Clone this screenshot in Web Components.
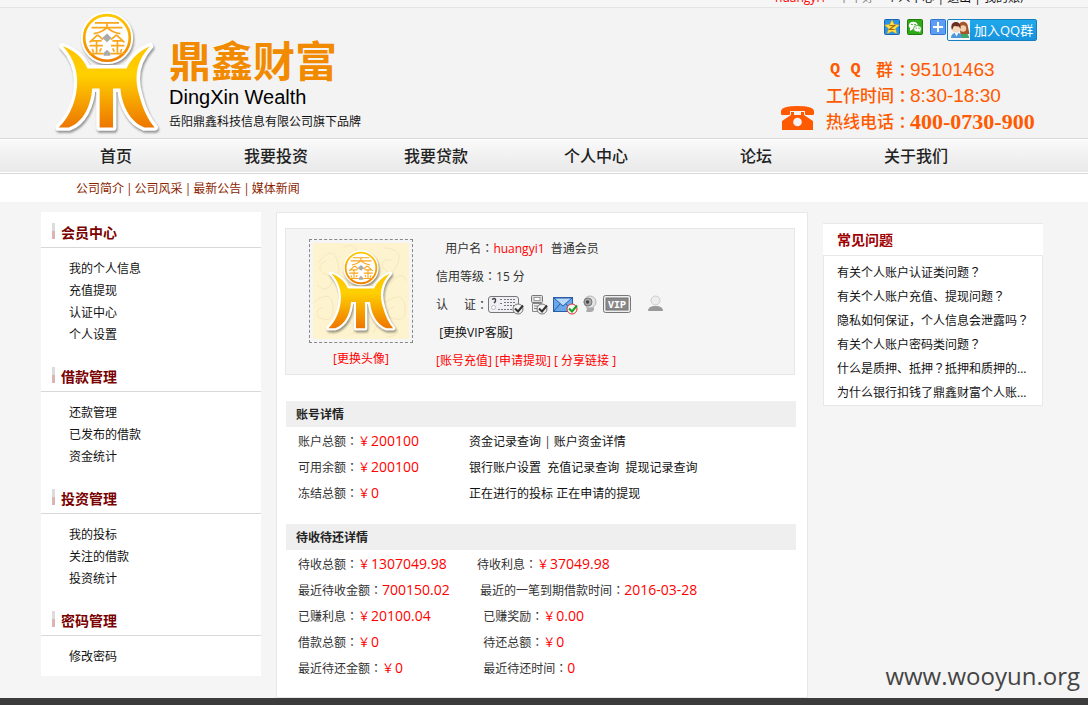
<!DOCTYPE html>
<html lang="zh-CN">
<head>
<meta charset="utf-8">
<title>鼎鑫财富 - 个人中心</title>
<style>
html,body{margin:0;height:100%}
body{background:#f5f5f5;color:#333;font:12px/22px "Open Sans","Noto Sans CJK SC",sans-serif}
</style>
</head>
<body>
<app-page></app-page>
<script>
const define = (name, css, html) => {
  const tpl = document.createElement('template');
  const base = '*{box-sizing:border-box}a{color:inherit;text-decoration:none}ul,h1,h2,h3,p{margin:0;padding:0;list-style:none}.c{font-family:"Noto Sans CJK JP",sans-serif;line-height:1}';
  tpl.innerHTML = `<style>:host{display:block}${base}${css}</style>${html}`;
  customElements.define(name, class extends HTMLElement {
    constructor() {
      super();
      this.attachShadow({mode: 'open'}).appendChild(tpl.content.cloneNode(true));
    }
  });
};
const colon = '<span class="c" lang="ja">：</span>';

define('brand-mark', `svg{display:block;width:100%;height:100%;overflow:visible;filter:drop-shadow(1px 2px 1px #0006)}`, `
<svg viewBox="165 30 310 375" aria-hidden="true">
<defs><linearGradient id="g" x1="0" y1="0" x2="0" y2="1"><stop offset="0" stop-color="#ffc400"/><stop offset=".35" stop-color="#ffd000"/><stop offset="1" stop-color="#ee7600"/></linearGradient>
<linearGradient id="r" x1="0" y1="0" x2="0" y2="1"><stop offset="0" stop-color="#ffc800"/><stop offset="1" stop-color="#f08000"/></linearGradient></defs>
<g stroke="#fff" stroke-width="20" stroke-linejoin="round" fill="#fff"><circle cx="320" cy="113" r="68"/>
<path d="M188 138C220 148 250 174 262 204H378C392 174 420 150 448 138C405 185 400 235 418 290C428 328 443 358 462 380H432C390 365 364 315 360 264H338V380H298V264H276C272 315 250 365 206 380H176C213 345 232 290 231 240C230 200 214 165 188 138Z"/></g>
<path fill="url(#g)" d="M188 138C220 148 250 174 262 204H378C392 174 420 150 448 138C405 185 400 235 418 290C428 328 443 358 462 380H432C390 365 364 315 360 264H338V380H298V264H276C272 315 250 365 206 380H176C213 345 232 290 231 240C230 200 214 165 188 138Z"/>
<circle cx="320" cy="113" r="68" fill="#fff" stroke="url(#r)" stroke-width="8"/>
<g fill="none" stroke="#f9a61a" stroke-width="5"><path d="M284 68H356M274 82H366M320 68V82Q302 98 280 100M320 82Q338 98 360 100"/>
<path d="M292 104L268 126M292 104L308 118M274 122H304M268 136H308M289 122V160M276 146L280 156M303 144L298 154M266 160H310"/>
<path d="M348 104L332 118M348 104L372 126M336 122H366M332 136H372M351 122V160M337 144L342 154M364 146L360 156M330 160H374"/></g>
<path d="M320 100L334 113L320 126L306 113ZM320 148L330 158V166H310V158Z" fill="#aaa"/>
</svg>`);

define('top-bar', `:host{background:#f6f6f6;border-bottom:1px solid #e4e4e4}
nav{height:7px;overflow:hidden;display:flex;align-items:flex-end;justify-content:flex-end;max-width:976px;margin:auto;color:#111;white-space:pre}
span,a{line-height:18px}.u{color:#f00}.g{color:#888;margin:0 12px}`,
`<nav><a class="u" href="#">huangyi1</a><span class="g">下午好</span><a href="#">个人中心</a><span> | </span><a href="#">退出</a><span> | </span><a href="#">我的账户</a></nav>`);

define('share-bar', `:host{display:flex;align-items:flex-start}
a{display:block;height:16px;margin-right:7px}a svg{display:block}a:nth-of-type(3){margin-right:1px}
.qq{display:flex;height:22px;width:90px;margin:0;background:linear-gradient(#1fa8ec,#1793dd);border:1px solid #1580c0;border-radius:2px;color:#fff;font-size:13px;line-height:20px;overflow:hidden}
.qq svg{margin-right:4px;flex:none}`,
`<a href="#" aria-label="QQ空间"><svg width="16" height="16"><rect x=".5" y=".5" width="15" height="15" rx="1" fill="#2a93e6" stroke="#1464b8"/><path d="M8 .8l2.200 4.700 5.300.5-4 3.600 1.200 5.200L8 12.200l-4.700 2.600 1.200-5.200L.5 6l5.300-.5z" fill="#ffe14a" stroke="#e8a000" stroke-width=".5"/><path d="M5.500 6.500h5l-5 4h5" fill="none" stroke="#a06b10" stroke-width="1.200"/></svg></a>
<a href="#" aria-label="微信"><svg width="16" height="16"><rect x=".5" y=".5" width="15" height="15" rx="1" fill="#2fa915" stroke="#1d7d0c"/><ellipse cx="6.300" cy="6.500" rx="4.500" ry="3.800" fill="#fff"/><path d="M3 9l0 3 3-2z" fill="#fff"/><ellipse cx="10.500" cy="9.800" rx="4" ry="3.300" fill="#fff" stroke="#269a10" stroke-width=".8"/><path d="M12 12l1 2 .5-3z" fill="#fff"/><g fill="#269a10"><circle cx="5" cy="5.500" r=".8"/><circle cx="8" cy="5.500" r=".8"/><circle cx="9.200" cy="9.200" r=".6"/><circle cx="12" cy="9.200" r=".6"/></g></svg></a>
<a href="#" aria-label="分享"><svg width="16" height="16"><rect x=".5" y=".5" width="15" height="15" rx="1" fill="#5b9ef3" stroke="#2f71cf"/><path d="M8 3v10M3 8h10" stroke="#fff" stroke-width="2"/></svg></a>
<a class="qq" href="#"><svg width="22" height="20"><rect width="22" height="20" fill="#f4f7fa"/><path d="M11 18c0-7 10-7 10 0z" fill="#3fa56b"/><path d="M11 5c1-5 9-4 9 2l1.500 7h-9z" fill="#a5552a"/><circle cx="15" cy="8.500" r="3.200" fill="#f5d0b0"/><path d="M3 18c0-7 11-7 11 0z" fill="#4e97d8"/><path d="M6.500 12.500l2 4 2-4z" fill="#fff"/><circle cx="8" cy="8.500" r="4" fill="#f8d8bc"/><path d="M4 10C0 0 14-1 12.500 9L11 6.500 6 6z" fill="#6b2f22"/></svg>加入QQ群</a>`);

define('contact-info', `:host{display:flex;align-items:flex-end;gap:12px;color:#ff5a00}
.ph{display:block;margin-bottom:5px}
dl{margin:0;display:grid;grid-template-columns:68px 16px auto;font-size:17px;line-height:26px;font-weight:500}
.c{line-height:26px}
dd{margin:0;font:500 19px/26px "Liberation Sans",sans-serif}
dt.q{display:flex;justify-content:space-between;padding:0 1px 0 4px}.q b{font:700 17px/26px "Liberation Mono",monospace}
dd.tel{font:700 22px/26px "Liberation Serif",serif}`,
`<svg class="ph" width="33" height="24" viewBox="0 0 33 24" aria-hidden="true"><path fill="#ff5a00" d="M0 8V5Q1 0 16.500 0T33 5V8Q33 9 32 9H25Q24 9 24 8V5H9V8Q9 9 8 9H1Q0 9 0 8ZM10 6H13V9H20V6H23V9L32 15V24H1V15L10 9Z"/><circle cx="16.500" cy="16" r="4.300" fill="#f3f3f3"/></svg>
<dl><dt class="q"><b>Q Q</b><span>群</span></dt>${colon}<dd>95101463</dd>
<dt>工作时间</dt>${colon}<dd>8:30-18:30</dd>
<dt>热线电话</dt>${colon}<dd class="tel">400-0730-900</dd></dl>`);

define('site-header', `:host{background:#f3f3f3}
.in{max-width:1006px;margin:auto;display:flex;justify-content:space-between;height:130px}
.logo{display:flex;padding:2px 0 0 14px}brand-mark{width:104px;height:126px}
.t{padding:28px 0 0 10px;color:#111}
h1{font-size:42px;line-height:46px;font-weight:700;color:#f28a00}
.en{font:20px/26px "Liberation Sans",sans-serif;color:#000}
.t p:last-child{line-height:24px}
.r{display:flex;flex-direction:column;width:266px;padding:11px 0 3px}
share-bar{margin-left:103px}contact-info{margin-top:auto}`,
`<div class="in"><a class="logo" href="#"><brand-mark></brand-mark><div class="t"><h1>鼎鑫财富</h1><p class="en">DingXin Wealth</p><p>岳阳鼎鑫科技信息有限公司旗下品牌</p></div></a>
<div class="r"><share-bar></share-bar><contact-info></contact-info></div></div>`);

define('main-nav', `:host{border:1px solid #d8d8d8;border-width:1px 0;background:linear-gradient(#fafafa,#e8e8e8);box-shadow:inset 0 1px #fff,inset 0 -1px #fff}
ul{display:flex;max-width:1016px;margin:auto;font-size:16px;line-height:34px;font-weight:500;color:#222}
li{flex:0 1 160px;text-align:center}`,
`<nav><ul>${['首页','我要投资','我要贷款','个人中心','论坛','关于我们'].map(t=>`<li><a href="#">${t}</a></li>`).join('')}</ul></nav>`);

define('sub-nav', `:host{background:#fff}nav{display:flex;gap:2px;max-width:1006px;margin:auto;padding:2px 0 0 35px;line-height:26px;color:#8b2500}`,
`<nav>${['公司简介','公司风采','最新公告','媒体新闻'].map(t=>`<a href="#">${t}</a>`).join('<span>|</span>')}</nav>`);

define('menu-group', `h2{display:flex;align-items:center;height:36px;border-bottom:1px solid #d8d8d8;padding:6px 0 0 20px;font-size:14px;font-weight:700;color:#7a0000;position:relative}
h2::before{content:"";position:absolute;left:11px;top:11px;width:3px;height:16px;background:linear-gradient(#dcdcdc 50%,#dcb4b4 50%)}
.b{padding:10px 0 8px 28px;color:#111}`,
`<h2><slot name="title"></slot></h2><div class="b"><slot></slot></div>`);

define('side-menu', `:host{background:#fff}nav{display:grid;gap:2px}a{display:block}`,
`<nav>${[['会员中心','我的个人信息','充值提现','认证中心','个人设置'],['借款管理','还款管理','已发布的借款','资金统计'],['投资管理','我的投标','关注的借款','投资统计'],['密码管理','修改密码']]
.map(([h,...l])=>`<menu-group><span slot="title">${h}</span>${l.map(t=>`<a href="#">${t}</a>`).join('')}</menu-group>`).join('')}</nav>`);

define('cert-icons', `:host{display:flex;align-items:center;height:28px}svg{display:block}`,
`<svg width="180" height="22" viewBox="0 0 180 22" aria-hidden="true">
<defs><g id="k"><circle cx="5" cy="5" r="5" fill="#f4f4f4" stroke="currentColor"/><path d="M2 4.500l3 3 5-6" fill="none" stroke="var(--t)" stroke-width="2"/></g></defs>
<rect x=".5" y="2.500" width="30" height="16" rx="2.500" fill="#f0f0f4" stroke="#777"/><path d="M4 5.500q3-2 3.500 0t-1.500 3.500" fill="none" stroke="#444" stroke-width="1.500"/><circle cx="5.500" cy="13.500" r="2" fill="#fff" stroke="#bbb"/><path d="M12 5.500h2M12 9.500h2M16 5.500h12M16 8.500h12M16 11.500h12M10 15.500h15" stroke="#777" stroke-dasharray="2 1"/>
<use href="#k" x="25" y="10" style="color:#777;--t:#333"/>
<rect x="43.500" y="1.500" width="11" height="7" rx="1" fill="#ddd" stroke="#777"/><rect x="46" y="3.500" width="6" height="3" fill="#fff" stroke="#999"/><path d="M44.500 9.500h9v8h-9zM46 12h6M46 14.500h6" fill="#eee" stroke="#888"/><use href="#k" x="49" y="10" style="color:#777;--t:#333"/>
<rect x="65.500" y="3.500" width="19" height="14" fill="#69a8ea" stroke="#2a5da8"/><path d="M66 4l9 8 9-8zM66 17l6-7M84 17l-6-7" fill="#b9d9fb" stroke="#2a5da8"/><use href="#k" x="79" y="10" style="color:#e03030;--t:#1ca01c"/>
<path d="M98 12h7q3 5-2 6h-4q-2-1 0-2z" fill="#aaa"/><circle cx="102" cy="8" r="6" fill="#e4e4e4" stroke="#b5b5b5"/><circle cx="100" cy="8" r="4" fill="#aaa" stroke="#777"/><circle cx="99.500" cy="8" r="1.700" fill="#444"/>
<rect x="115.500" y="1.500" width="27" height="17" rx="2" fill="#eee" stroke="#777"/><rect x="118" y="4" width="22" height="12" fill="#888" stroke="#777"/><text x="129" y="14" text-anchor="middle" font-family="Liberation Mono,monospace" font-weight="700" font-size="10" fill="#fff">VIP</text>
<path d="M160 17q0-5 7.500-5t7.500 5z" fill="#999"/><circle cx="167.500" cy="6.500" r="4.500" fill="#ededed" stroke="#ccc"/></svg>`);

define('user-panel', `:host{display:flex;background:#f5f5f5;border:1px solid #e6e6e6;padding:6px 23px 0;gap:23px;height:147px}
.av{width:104px;text-align:center;padding-top:4px}.av a,.red{color:#f00}
.pic{height:104px;border:1px dashed #888;padding:3px;margin-bottom:5px}
.bg{display:grid;place-items:center;height:96px;background:#fdf3cf}
.bg>*{grid-area:1/1}.bg svg{width:96px;height:96px}
brand-mark{width:70px;height:85px}
li{height:28px;line-height:28px;white-space:pre}.d{color:#111}
.cert{display:flex}.cert .c{line-height:28px}.n{width:28px}`,
`<div class="av"><div class="pic"><div class="bg"><svg viewBox="0 0 96 96" fill="none" stroke="#f6e8bb" aria-hidden="true"><path d="M5 20q15-20 20 0t-15 10q-8-8 3-12M70 5q20 0 15 15t-15 5q-3-10 8-8M0 60q18-15 20 3t-14 12q-6-8 4-11M20 92q0-20 14-14t4 14M72 60q18-14 20 4t-16 10q-4-8 5-10M60 90q8-18 20-8t-6 12M30 5q12-8 14 6M78 40q10-14 16-2M4 42q10 10 16-4"/></svg><brand-mark></brand-mark></div></div><a href="#">[更换头像]</a></div>
<ul><li>&nbsp;&nbsp; 用户名${colon}<span class="red">huangyi1</span>&nbsp; 普通会员</li><li>信用等级${colon}15 分</li>
<li class="cert"><span class="n">认</span>证${colon}<cert-icons></cert-icons></li><li class="d"> <a href="#">[更换VIP客服]</a></li>
<li class="red"><a href="#">[账号充值]</a> <a href="#">[申请提现]</a> <a href="#">[ 分享链接 ]</a></li></ul>`);

define('detail-section', `h3{height:26px;background:#efefef;padding:1px 0 0 10px;font-size:12px;line-height:26px;font-weight:700;color:#222}
.b{padding:2px 0 0 12px}`, `<h3><slot name="title"></slot></h3><div class="b"><slot></slot></div>`);

const yen = v => `<span class="y">${v[0] === '￥' ? '<small>￥</small>' + v.slice(1) : v}</span>`;
const field = (l, v) => `${l}${colon}${yen(v)}`;
const rows = (w, list) => `<table style="--w:${w}">${list.map(([a, b]) => `<tr><td>${a}</td><td>${b}</td></tr>`).join('')}</table>`;
const links = (l, s) => l.map(t => `<a href="#">${t}</a>`).join(s);
const N = '&nbsp;';

define('account-card', `:host{background:#fff;border:1px solid #e8e8e8;padding:15px 11px 15px 8px}
user-panel{margin-bottom:26px;margin-right:1px}detail-section{margin-left:1px}detail-section+detail-section{margin-top:17px}
table{border-collapse:collapse;width:100%;table-layout:fixed}td{padding:0;height:26px;line-height:24px;white-space:nowrap}td:first-child{width:var(--w)}
.y{color:#f00;font-size:14px;line-height:1}small{font-size:12px;margin-right:1px}a{color:#111}`,
`<user-panel></user-panel>
<detail-section><span slot="title">账号详情</span>${rows('171px', [
 [field('账户总额','￥200100'), links(['资金记录查询','账户资金详情'],' | ')],
 [field('可用余额','￥200100'), links(['银行账户设置','充值记录查询','提现记录查询'], N+' ')],
 [field('冻结总额','￥0'), links(['正在进行的投标','正在申请的提现'],' ')]])}</detail-section>
<detail-section><span slot="title">待收待还详情</span>${rows('179px', [
 [field('待收总额','￥1307049.98'), field('待收利息','￥37049.98')],
 [field('最近待收金额','700150.02'), N+field('最近的一笔到期借款时间','2016-03-28')],
 [field('已赚利息','￥20100.04'), N+N+field('已赚奖励','￥0.00')],
 [field('借款总额','￥0'), N+N+field('待还总额','￥0')],
 [field('最近待还金额','￥0'), N+N+field('最近待还时间','0')]])}</detail-section>`);

define('faq-panel', `:host{background:#fff}
h2{height:33px;border:1px solid #e8e8e8;border-width:1px 0;padding-left:14px;font-size:14px;line-height:31px;font-weight:700;color:#a00000}
ul{border:1px solid #e8e8e8;border-top:0;padding:5px 8px 0 13px;color:#111}
li{height:24px;line-height:24px;white-space:nowrap;overflow:hidden;text-overflow:ellipsis}`,
`<h2>常见问题</h2><ul>${['有关个人账户认证类问题？','有关个人账户充值、提现问题？','隐私如何保证，个人信息会泄露吗？','有关个人账户密码类问题？','什么是质押、抵押？抵押和质押的...','为什么银行扣钱了鼎鑫财富个人账...'].map(t=>`<li><a href="#">${t.replace(/？/g,'<span class="c" lang="ja">？</span>')}</a></li>`).join('')}</ul>`);

define('app-page', `:host{display:flex;flex-direction:column;min-height:100%;position:relative}
main{width:100%;max-width:1006px;box-sizing:border-box;margin:0 auto;padding:10px 4px 0 0;display:grid;grid-template-columns:220px minmax(0,1fr) 220px;gap:15px;align-items:start}
faq-panel{margin-top:11px}
footer{flex:1;min-height:6px;background:#3c3c3c}
.wm{position:absolute;right:8px;bottom:12px;font-size:24px;line-height:34px;color:#444}`,
`<top-bar></top-bar><site-header></site-header><main-nav></main-nav><sub-nav></sub-nav>
<main><side-menu></side-menu><account-card></account-card><faq-panel></faq-panel></main><footer></footer><span class="wm">www.wooyun.org</span>`);
</script>
</body>
</html>
